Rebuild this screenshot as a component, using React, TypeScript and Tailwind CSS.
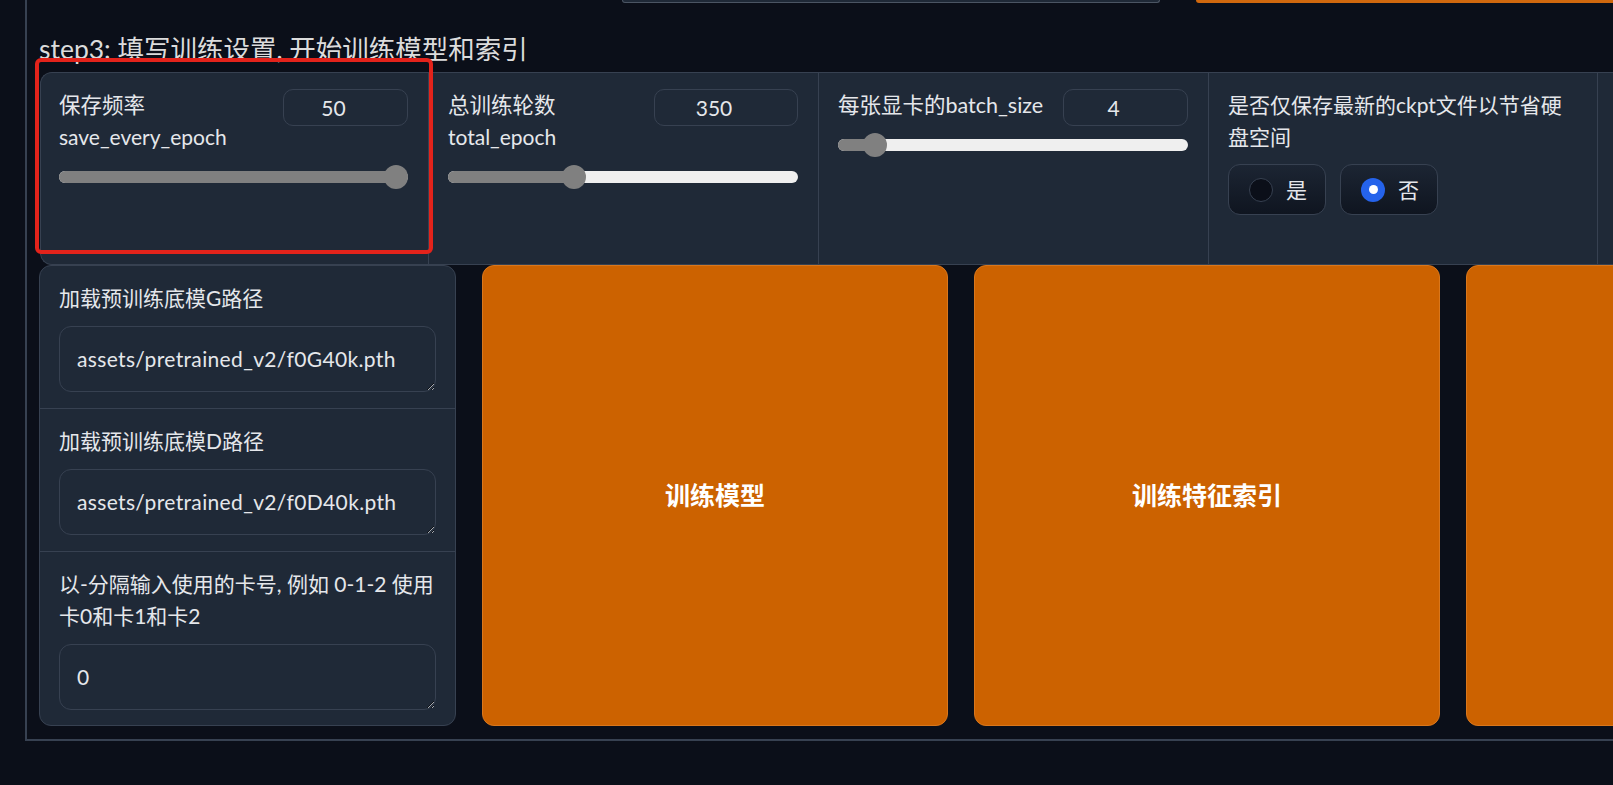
const font = "font-['Lato','Noto_Sans_CJK_SC',sans-serif]";

function NumberBox({ value, width }: { value: string; width: string }) {
  return (
    <div className={`${width} h-[37px] shrink-0 rounded-[10px] border border-[#374151] flex items-center justify-center pr-[24px] text-[21px] text-[#e5e7eb]`}>
      {value}
    </div>
  );
}

function Slider({ frac }: { frac: number }) {
  return (
    <div className="relative h-[24px] flex items-center">
      <div className="w-full h-[12px] rounded-full bg-[#efefef] overflow-hidden">
        <div className="h-full bg-[#808080]" style={{ width: `calc(${frac} * (100% - 24px) + 12px)` }} />
      </div>
      <div
        className="absolute top-0 w-[24px] h-[24px] rounded-full bg-[#808080]"
        style={{ left: `calc(${frac} * (100% - 24px))` }}
      />
    </div>
  );
}

function SliderCol({
  label, info, value, numWidth, frac, cls,
}: { label: string; info?: string; value: string; numWidth: string; frac: number; cls: string }) {
  return (
    <div className={`${cls} shrink-0 border-r border-[#374151] pt-[16px]`}>
      <div className={`flex items-start justify-between ${info ? "h-[64px]" : "h-[32px]"}`}>
        <div className="text-[21px] leading-[32px] text-[#e5e7eb]">
          <div className="text-[21.5px]">{label}</div>
          {info && <div>{info}</div>}
        </div>
        <NumberBox value={value} width={numWidth} />
      </div>
      <div className="mt-[12px]">
        <Slider frac={frac} />
      </div>
    </div>
  );
}

function RadioOpt({ label, checked }: { label: string; checked?: boolean }) {
  return (
    <div className="w-[98px] h-[51px] rounded-[12px] border border-[#374151] bg-linear-to-b from-[#1c2533] to-[#0f1520] flex items-center pl-[20px] gap-[13px]">
      {checked ? (
        <div className="w-[24px] h-[24px] rounded-full bg-[#2563eb] flex items-center justify-center">
          <div className="w-[9px] h-[9px] rounded-full bg-white" />
        </div>
      ) : (
        <div className="w-[24px] h-[24px] rounded-full bg-[#0b0f19] border border-[#374151]" />
      )}
      <span className="text-[21px] text-[#e5e7eb]">{label}</span>
    </div>
  );
}

function PathField({ label, value, lines }: { label: React.ReactNode; value: string; lines?: number }) {
  return (
    <div className="px-[19px] pt-[16px] pb-[16px] last:pb-[15px]">
      <div className={`text-[21px] leading-[32px] text-[#e5e7eb] whitespace-nowrap ${lines === 2 ? "h-[64px]" : "h-[32px]"}`}>
        {label}
      </div>
      <textarea
        readOnly
        defaultValue={value}
        className="mt-[12px] block w-full h-[66px] rounded-[12px] border border-[#374151] bg-[#1f2937] px-[17px] py-[16px] text-[21px] leading-[32px] tracking-[0.35px] text-[#e5e7eb] outline-none resize-y [color-scheme:dark]"
      />
    </div>
  );
}

export default function App() {
  return (
    <div className={`relative w-[1613px] h-[785px] overflow-hidden bg-[#0b0f19] ${font}`}>
      <div className="ml-[25px] w-[1800px] border-l-2 border-b-2 border-[#374151] pl-[12px] pb-[13px]">
        {/* bottoms of the widgets above */}
        <div className="flex h-[3px]">
          <div className="ml-[583px] w-[538px] h-[3px] rounded-b-[4px] border-b border-x border-[#4b5563] bg-[#1f2937]" />
          <div className="ml-[36px] w-[600px] h-[3px] rounded-bl-[4px] bg-[#d0680e]" />
        </div>

        <div className="mt-[28px] h-[36px] text-[26.5px] leading-[36px] text-[#dcdcdc] whitespace-nowrap">
          step3: 填写训练设置, 开始训练模型和索引
        </div>

        {/* settings row */}
        <div className="mt-[5px] ml-[1px] h-[193px] flex rounded-l-[12px] border-y border-l border-[#374151] bg-[#1f2937]">
          <SliderCol cls="w-[388px] pl-[18px] pr-[20px]" label="保存频率" info="save_every_epoch" value="50" numWidth="w-[125px]" frac={1} />
          <SliderCol cls="w-[390px] pl-[19px] pr-[20px]" label="总训练轮数" info="total_epoch" value="350" numWidth="w-[144px]" frac={348 / 998} />
          <SliderCol cls="w-[390px] pl-[19px] pr-[20px]" label="每张显卡的batch_size" value="4" numWidth="w-[125px]" frac={3 / 39} />
          <div className="w-[389px] shrink-0 border-r border-[#374151] pt-[16px] pl-[19px] pr-[20px]">
            <div className="text-[21px] leading-[32px] text-[#e5e7eb] whitespace-nowrap">
              是否仅保存最新的ckpt文件以节省硬<br />盘空间
            </div>
            <div className="mt-[11px] flex gap-[14px]">
              <RadioOpt label="是" />
              <RadioOpt label="否" checked />
            </div>
          </div>
          <div className="w-[390px] shrink-0" />
        </div>

        {/* paths + buttons */}
        <div className="flex gap-[26px] h-[461px]">
          <div className="w-[417px] shrink-0 rounded-[12px] border border-[#374151] bg-[#1f2937] flex flex-col divide-y divide-[#374151]">
            <PathField label="加载预训练底模G路径" value="assets/pretrained_v2/f0G40k.pth" />
            <PathField label="加载预训练底模D路径" value="assets/pretrained_v2/f0D40k.pth" />
            <PathField
              lines={2}
              label={<>以-分隔输入使用的卡号, 例如 0-1-2 使用<br />卡0和卡1和卡2</>}
              value="0"
            />
          </div>
          {["训练模型", "训练特征索引", ""].map((t, i) => (
            <button
              key={i}
              className="w-[466px] shrink-0 h-full rounded-[12px] border border-[#d9771c] bg-[#cc6200] text-white text-[25px] font-bold"
            >
              {t}
            </button>
          ))}
        </div>
      </div>

      {/* annotation */}
      <div className="absolute left-[35px] top-[58px] w-[398px] h-[196px] rounded-[6px] border-4 border-[#e3231b]" />
    </div>
  );
}
